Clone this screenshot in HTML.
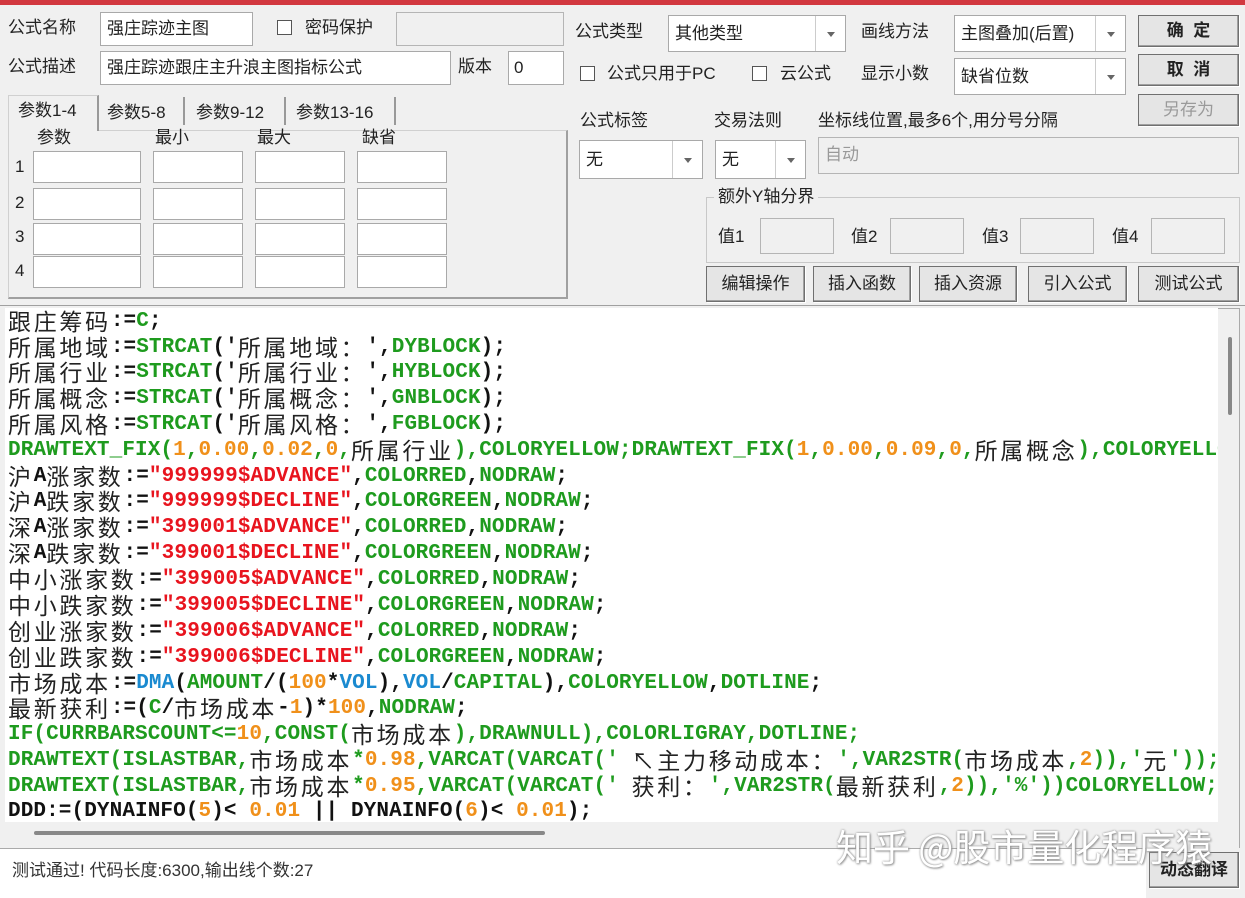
<!DOCTYPE html>
<html><head><meta charset="utf-8">
<style>
*{margin:0;padding:0;box-sizing:border-box}
body{width:1245px;height:898px;background:#f0f0f0;position:relative;overflow:hidden;font-family:"Liberation Sans","Noto Sans CJK SC",sans-serif;font-size:17px;line-height:20px;color:#222}
.a{position:absolute;white-space:nowrap}
.in{position:absolute;background:#fff;border:1px solid #a9a9a9}
.dis{position:absolute;background:#f0f0f0;border:1px solid #b5b5b5}
.btn{position:absolute;background:#e5e5e5;border:1px solid #707070;box-shadow:inset -1px -1px 0 #a0a0a0,1px 1px 0 #fff;text-align:center;font-size:17px}
.cb{position:absolute;width:15px;height:15px;border:1px solid #555;background:#fff}
.dd{position:absolute;right:0;top:0;bottom:0;width:30px;border-left:1px solid #ccc;background:#fff}
.dd:after{content:"";position:absolute;left:11px;top:50%;margin-top:-2px;border-left:4px solid transparent;border-right:4px solid transparent;border-top:5px solid #666}
#code{position:absolute;left:5px;top:308px;width:1213px;height:514px;background:#fff;overflow:hidden}
.ln{position:absolute;left:3px;height:26px;line-height:26px;white-space:nowrap;font-family:"Liberation Mono",monospace;font-weight:bold;font-size:21px;letter-spacing:0.1px;color:#111}
.c{font-family:"Noto Sans CJK SC",sans-serif;font-weight:normal;font-size:23px;line-height:26px;letter-spacing:2.7px;color:#222;display:inline-block;height:26px;vertical-align:top;position:relative;top:-2px}
.g{color:#1e9b1e}.r{color:#e8141e}.o{color:#f0901a}.b{color:#1a8ad0}
</style></head><body>
<div class="a" style="left:0;top:0;width:1245px;height:5px;background:#d2383f"></div>

<div class="a" style="left:8px;top:18px">公式名称</div>
<div class="in" style="left:100px;top:12px;width:153px;height:34px"><span class="a" style="left:6px;top:6px">强庄踪迹主图</span></div>
<div class="cb" style="left:277px;top:20px"></div>
<div class="a" style="left:305px;top:18px">密码保护</div>
<div class="dis" style="left:396px;top:12px;width:168px;height:34px"></div>

<div class="a" style="left:8px;top:57px">公式描述</div>
<div class="in" style="left:100px;top:51px;width:351px;height:34px"><span class="a" style="left:6px;top:6px">强庄踪迹跟庄主升浪主图指标公式</span></div>
<div class="a" style="left:458px;top:57px">版本</div>
<div class="in" style="left:508px;top:51px;width:56px;height:34px"><span class="a" style="left:5px;top:6px">0</span></div>

<!-- tabs -->
<div class="a" style="left:8px;top:130px;width:560px;height:169px;border:1px solid #d0d0d0;border-right:2px solid #a0a0a0;border-bottom:2px solid #a0a0a0"></div>
<div class="a" style="left:8px;top:95px;width:91px;height:36px;background:#f0f0f0;border:1px solid #d0d0d0;border-bottom:none;border-right:2px solid #999"></div>
<div class="a" style="left:18px;top:101px">参数1-4</div>
<div class="a" style="left:101px;top:97px;width:84px;height:28px;border-right:2px solid #999"></div>
<div class="a" style="left:107px;top:103px">参数5-8</div>
<div class="a" style="left:190px;top:97px;width:96px;height:28px;border-right:2px solid #999"></div>
<div class="a" style="left:196px;top:103px">参数9-12</div>
<div class="a" style="left:290px;top:97px;width:106px;height:28px;border-right:2px solid #999"></div>
<div class="a" style="left:296px;top:103px">参数13-16</div>
<div class="a" style="left:37px;top:128px">参数</div>
<div class="a" style="left:155px;top:128px">最小</div>
<div class="a" style="left:257px;top:128px">最大</div>
<div class="a" style="left:362px;top:128px">缺省</div>
<div class="a" style="left:15px;top:157px">1</div>
<div class="a" style="left:15px;top:193px">2</div>
<div class="a" style="left:15px;top:227px">3</div>
<div class="a" style="left:15px;top:261px">4</div>
<div class="in" style="left:33px;top:151px;width:108px;height:32px"></div>
<div class="in" style="left:153px;top:151px;width:90px;height:32px"></div>
<div class="in" style="left:255px;top:151px;width:90px;height:32px"></div>
<div class="in" style="left:357px;top:151px;width:90px;height:32px"></div>
<div class="in" style="left:33px;top:188px;width:108px;height:32px"></div>
<div class="in" style="left:153px;top:188px;width:90px;height:32px"></div>
<div class="in" style="left:255px;top:188px;width:90px;height:32px"></div>
<div class="in" style="left:357px;top:188px;width:90px;height:32px"></div>
<div class="in" style="left:33px;top:223px;width:108px;height:32px"></div>
<div class="in" style="left:153px;top:223px;width:90px;height:32px"></div>
<div class="in" style="left:255px;top:223px;width:90px;height:32px"></div>
<div class="in" style="left:357px;top:223px;width:90px;height:32px"></div>
<div class="in" style="left:33px;top:256px;width:108px;height:32px"></div>
<div class="in" style="left:153px;top:256px;width:90px;height:32px"></div>
<div class="in" style="left:255px;top:256px;width:90px;height:32px"></div>
<div class="in" style="left:357px;top:256px;width:90px;height:32px"></div>

<!-- right -->
<div class="a" style="left:575px;top:22px">公式类型</div>
<div class="in" style="left:668px;top:15px;width:178px;height:37px"><span class="a" style="left:6px;top:8px">其他类型</span><div class="dd"></div></div>
<div class="a" style="left:861px;top:22px">画线方法</div>
<div class="in" style="left:954px;top:15px;width:172px;height:37px"><span class="a" style="left:6px;top:8px">主图叠加(后置)</span><div class="dd"></div></div>
<div class="btn" style="left:1138px;top:15px;width:101px;height:32px;line-height:30px;font-weight:bold">确&nbsp;&nbsp;定</div>

<div class="cb" style="left:580px;top:66px"></div>
<div class="a" style="left:607px;top:64px">公式只用于PC</div>
<div class="cb" style="left:752px;top:66px"></div>
<div class="a" style="left:780px;top:64px">云公式</div>
<div class="a" style="left:861px;top:64px">显示小数</div>
<div class="in" style="left:954px;top:58px;width:172px;height:37px"><span class="a" style="left:6px;top:8px">缺省位数</span><div class="dd"></div></div>
<div class="btn" style="left:1138px;top:54px;width:101px;height:32px;line-height:30px;font-weight:bold">取&nbsp;&nbsp;消</div>
<div class="btn" style="left:1138px;top:94px;width:101px;height:32px;line-height:30px;color:#9a9a9a">另存为</div>

<div class="a" style="left:580px;top:111px">公式标签</div>
<div class="a" style="left:714px;top:111px">交易法则</div>
<div class="a" style="left:818px;top:111px">坐标线位置,最多6个,用分号分隔</div>
<div class="in" style="left:579px;top:140px;width:124px;height:39px"><span class="a" style="left:6px;top:9px">无</span><div class="dd"></div></div>
<div class="in" style="left:715px;top:140px;width:91px;height:39px"><span class="a" style="left:6px;top:9px">无</span><div class="dd"></div></div>
<div class="dis" style="left:818px;top:137px;width:421px;height:37px"><span class="a" style="left:6px;top:7px;color:#999">自动</span></div>

<div class="a" style="left:706px;top:197px;width:534px;height:66px;border:1px solid #c8c8c8"></div>
<div class="a" style="left:714px;top:187px;background:#f0f0f0;padding:0 4px">额外Y轴分界</div>
<div class="a" style="left:718px;top:227px">值1</div>
<div class="dis" style="left:760px;top:218px;width:74px;height:36px"></div>
<div class="a" style="left:851px;top:227px">值2</div>
<div class="dis" style="left:890px;top:218px;width:74px;height:36px"></div>
<div class="a" style="left:982px;top:227px">值3</div>
<div class="dis" style="left:1020px;top:218px;width:74px;height:36px"></div>
<div class="a" style="left:1112px;top:227px">值4</div>
<div class="dis" style="left:1151px;top:218px;width:74px;height:36px"></div>

<div class="btn" style="left:706px;top:266px;width:99px;height:36px;line-height:34px">编辑操作</div>
<div class="btn" style="left:813px;top:266px;width:98px;height:36px;line-height:34px">插入函数</div>
<div class="btn" style="left:919px;top:266px;width:98px;height:36px;line-height:34px">插入资源</div>
<div class="btn" style="left:1028px;top:266px;width:99px;height:36px;line-height:34px">引入公式</div>
<div class="btn" style="left:1138px;top:266px;width:101px;height:36px;line-height:34px">测试公式</div>

<!-- code -->
<div class="a" style="left:0;top:305px;width:1245px;height:1px;background:#a0a0a0"></div>
<div id="code">
<div class="ln" style="top:1px"><span class="c">跟庄筹码</span>:=<span class="g">C</span>;</div>
<div class="ln" style="top:27px"><span class="c">所属地域</span>:=<span class="g">STRCAT</span>('<span class="c">所属地域：</span>',<span class="g">DYBLOCK</span>);</div>
<div class="ln" style="top:52px"><span class="c">所属行业</span>:=<span class="g">STRCAT</span>('<span class="c">所属行业：</span>',<span class="g">HYBLOCK</span>);</div>
<div class="ln" style="top:78px"><span class="c">所属概念</span>:=<span class="g">STRCAT</span>('<span class="c">所属概念：</span>',<span class="g">GNBLOCK</span>);</div>
<div class="ln" style="top:104px"><span class="c">所属风格</span>:=<span class="g">STRCAT</span>('<span class="c">所属风格：</span>',<span class="g">FGBLOCK</span>);</div>
<div class="ln g" style="top:130px">DRAWTEXT_FIX(<span class="o">1</span>,<span class="o">0.00</span>,<span class="o">0.02</span>,<span class="o">0</span>,<span class="c">所属行业</span>),COLORYELLOW;DRAWTEXT_FIX(<span class="o">1</span>,<span class="o">0.00</span>,<span class="o">0.09</span>,<span class="o">0</span>,<span class="c">所属概念</span>),COLORYELLOW;</div>
<div class="ln" style="top:156px"><span class="c">沪</span>A<span class="c">涨家数</span>:=<span class="r">"999999$ADVANCE"</span>,<span class="g">COLORRED</span>,<span class="g">NODRAW</span>;</div>
<div class="ln" style="top:181px"><span class="c">沪</span>A<span class="c">跌家数</span>:=<span class="r">"999999$DECLINE"</span>,<span class="g">COLORGREEN</span>,<span class="g">NODRAW</span>;</div>
<div class="ln" style="top:207px"><span class="c">深</span>A<span class="c">涨家数</span>:=<span class="r">"399001$ADVANCE"</span>,<span class="g">COLORRED</span>,<span class="g">NODRAW</span>;</div>
<div class="ln" style="top:233px"><span class="c">深</span>A<span class="c">跌家数</span>:=<span class="r">"399001$DECLINE"</span>,<span class="g">COLORGREEN</span>,<span class="g">NODRAW</span>;</div>
<div class="ln" style="top:259px"><span class="c">中小涨家数</span>:=<span class="r">"399005$ADVANCE"</span>,<span class="g">COLORRED</span>,<span class="g">NODRAW</span>;</div>
<div class="ln" style="top:285px"><span class="c">中小跌家数</span>:=<span class="r">"399005$DECLINE"</span>,<span class="g">COLORGREEN</span>,<span class="g">NODRAW</span>;</div>
<div class="ln" style="top:311px"><span class="c">创业涨家数</span>:=<span class="r">"399006$ADVANCE"</span>,<span class="g">COLORRED</span>,<span class="g">NODRAW</span>;</div>
<div class="ln" style="top:337px"><span class="c">创业跌家数</span>:=<span class="r">"399006$DECLINE"</span>,<span class="g">COLORGREEN</span>,<span class="g">NODRAW</span>;</div>
<div class="ln" style="top:363px"><span class="c">市场成本</span>:=<span class="b">DMA</span>(<span class="g">AMOUNT</span>/(<span class="o">100</span>*<span class="b">VOL</span>),<span class="b">VOL</span>/<span class="g">CAPITAL</span>),<span class="g">COLORYELLOW</span>,<span class="g">DOTLINE</span>;</div>
<div class="ln" style="top:388px"><span class="c">最新获利</span>:=(<span class="g">C</span>/<span class="c">市场成本</span>-<span class="o">1</span>)*<span class="o">100</span>,<span class="g">NODRAW</span>;</div>
<div class="ln g" style="top:414px">IF(CURRBARSCOUNT&lt;=<span class="o">10</span>,CONST(<span class="c">市场成本</span>),DRAWNULL),COLORLIGRAY,DOTLINE;</div>
<div class="ln g" style="top:440px">DRAWTEXT(ISLASTBAR,<span class="c">市场成本</span>*<span class="o">0.98</span>,VARCAT(VARCAT(' <span class="c">↖主力移动成本：</span>',VAR2STR(<span class="c">市场成本</span>,<span class="o">2</span>)),'<span class="c">元</span>'));</div>
<div class="ln g" style="top:466px">DRAWTEXT(ISLASTBAR,<span class="c">市场成本</span>*<span class="o">0.95</span>,VARCAT(VARCAT(' <span class="c">获利：</span>',VAR2STR(<span class="c">最新获利</span>,<span class="o">2</span>)),'%'))COLORYELLOW;</div>
<div class="ln" style="top:491px">DDD:=(DYNAINFO(<span class="o">5</span>)&lt; <span class="o">0.01</span> || DYNAINFO(<span class="o">6</span>)&lt; <span class="o">0.01</span>);</div>
</div>
<div class="a" style="left:1218px;top:308px;width:22px;height:540px;background:#f0f0f0;border-right:1px solid #aaa;border-top:1px solid #aaa"></div>
<div class="a" style="left:1228px;top:337px;width:4px;height:78px;background:#888;border-radius:2px"></div>
<div class="a" style="left:5px;top:822px;width:1213px;height:26px;background:#f0f0f0"></div>
<div class="a" style="left:34px;top:831px;width:511px;height:4px;background:#888;border-radius:2px"></div>

<!-- status -->
<div class="a" style="left:0;top:848px;width:1146px;height:50px;background:#fff;border-top:1px solid #aaa"></div>
<div class="a" style="left:12px;top:861px;font-size:17px;color:#333">测试通过! 代码长度:6300,输出线个数:27</div>
<div class="btn" style="left:1149px;top:852px;width:90px;height:36px;line-height:34px;font-weight:bold">动态翻译</div>

<div class="a" style="left:836px;top:823px;font-size:37px;line-height:44px;color:#fff;text-shadow:0 0 2px #888,1px 1px 2px #999;font-family:'Noto Sans CJK SC',sans-serif">知乎 @股市量化程序猿</div>
</body></html>
